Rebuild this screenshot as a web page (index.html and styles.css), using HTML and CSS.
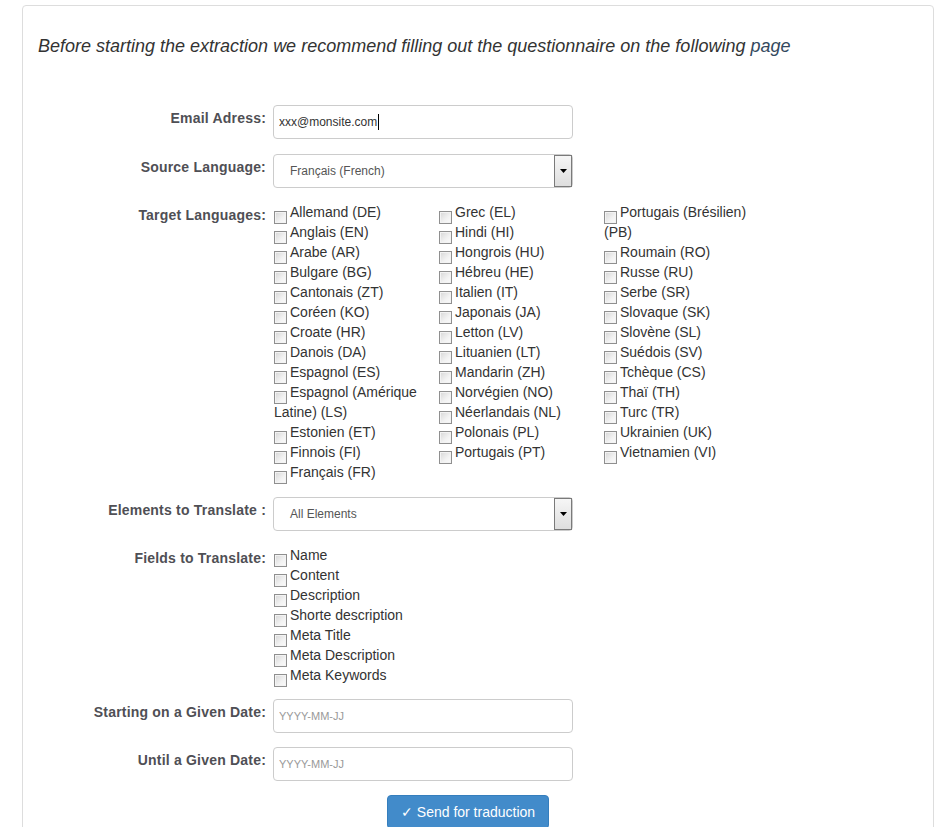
FILE: index.html
```html
<!DOCTYPE html>
<html lang="en">
<head>
<meta charset="utf-8">
<title>Extraction</title>
<link rel="stylesheet" href="styles.css">
</head>
<body>
<div class="page">
  <div class="panel">
    <p class="intro">Before starting the extraction we recommend filling out the questionnaire on the following <a class="intro-link">page</a></p>
    <form class="form">
      <label class="label">Email Adress:</label>
      <div class="field field-email">
        <input class="input" type="text" value="xxx@monsite.com">
        <span class="caret"></span>
      </div>

      <label class="label">Source Language:</label>
      <div class="field">
        <div class="select"><span class="select-text">Français (French)</span><span class="select-btn"><svg width="7" height="4" viewBox="0 0 7 4"><path d="M0 0H7L3.5 4Z" fill="#000"/></svg></span></div>
      </div>

      <label class="label">Target Languages:</label>
      <div class="checks">
        <div class="check-col">
          <label class="check"><input class="cb" type="checkbox">Allemand (DE)</label>
          <label class="check"><input class="cb" type="checkbox">Anglais (EN)</label>
          <label class="check"><input class="cb" type="checkbox">Arabe (AR)</label>
          <label class="check"><input class="cb" type="checkbox">Bulgare (BG)</label>
          <label class="check"><input class="cb" type="checkbox">Cantonais (ZT)</label>
          <label class="check"><input class="cb" type="checkbox">Coréen (KO)</label>
          <label class="check"><input class="cb" type="checkbox">Croate (HR)</label>
          <label class="check"><input class="cb" type="checkbox">Danois (DA)</label>
          <label class="check"><input class="cb" type="checkbox">Espagnol (ES)</label>
          <label class="check"><input class="cb" type="checkbox">Espagnol (Amérique Latine) (LS)</label>
          <label class="check"><input class="cb" type="checkbox">Estonien (ET)</label>
          <label class="check"><input class="cb" type="checkbox">Finnois (FI)</label>
          <label class="check"><input class="cb" type="checkbox">Français (FR)</label>
        </div>
        <div class="check-col">
          <label class="check"><input class="cb" type="checkbox">Grec (EL)</label>
          <label class="check"><input class="cb" type="checkbox">Hindi (HI)</label>
          <label class="check"><input class="cb" type="checkbox">Hongrois (HU)</label>
          <label class="check"><input class="cb" type="checkbox">Hébreu (HE)</label>
          <label class="check"><input class="cb" type="checkbox">Italien (IT)</label>
          <label class="check"><input class="cb" type="checkbox">Japonais (JA)</label>
          <label class="check"><input class="cb" type="checkbox">Letton (LV)</label>
          <label class="check"><input class="cb" type="checkbox">Lituanien (LT)</label>
          <label class="check"><input class="cb" type="checkbox">Mandarin (ZH)</label>
          <label class="check"><input class="cb" type="checkbox">Norvégien (NO)</label>
          <label class="check"><input class="cb" type="checkbox">Néerlandais (NL)</label>
          <label class="check"><input class="cb" type="checkbox">Polonais (PL)</label>
          <label class="check"><input class="cb" type="checkbox">Portugais (PT)</label>
        </div>
        <div class="check-col">
          <label class="check"><input class="cb" type="checkbox">Portugais (Brésilien) (PB)</label>
          <label class="check"><input class="cb" type="checkbox">Roumain (RO)</label>
          <label class="check"><input class="cb" type="checkbox">Russe (RU)</label>
          <label class="check"><input class="cb" type="checkbox">Serbe (SR)</label>
          <label class="check"><input class="cb" type="checkbox">Slovaque (SK)</label>
          <label class="check"><input class="cb" type="checkbox">Slovène (SL)</label>
          <label class="check"><input class="cb" type="checkbox">Suédois (SV)</label>
          <label class="check"><input class="cb" type="checkbox">Tchèque (CS)</label>
          <label class="check"><input class="cb" type="checkbox">Thaï (TH)</label>
          <label class="check"><input class="cb" type="checkbox">Turc (TR)</label>
          <label class="check"><input class="cb" type="checkbox">Ukrainien (UK)</label>
          <label class="check"><input class="cb" type="checkbox">Vietnamien (VI)</label>
        </div>
      </div>

      <label class="label">Elements to Translate :</label>
      <div class="field">
        <div class="select"><span class="select-text">All Elements</span><span class="select-btn"><svg width="7" height="4" viewBox="0 0 7 4"><path d="M0 0H7L3.5 4Z" fill="#000"/></svg></span></div>
      </div>

      <label class="label">Fields to Translate:</label>
      <div class="checks checks-fields">
        <div class="check-col">
          <label class="check"><input class="cb" type="checkbox">Name</label>
          <label class="check"><input class="cb" type="checkbox">Content</label>
          <label class="check"><input class="cb" type="checkbox">Description</label>
          <label class="check"><input class="cb" type="checkbox">Shorte description</label>
          <label class="check"><input class="cb" type="checkbox">Meta Title</label>
          <label class="check"><input class="cb" type="checkbox">Meta Description</label>
          <label class="check"><input class="cb" type="checkbox">Meta Keywords</label>
        </div>
      </div>

      <label class="label">Starting on a Given Date:</label>
      <div class="field"><input class="input input-date" type="text" placeholder="YYYY-MM-JJ"></div>

      <label class="label">Until a Given Date:</label>
      <div class="field"><input class="input input-date" type="text" placeholder="YYYY-MM-JJ"></div>

      <div class="actions">
        <button class="btn" type="button">✓ Send for traduction</button>
      </div>
    </form>
  </div>
</div>
</body>
</html>
```
FILE: styles.css
```css
* { box-sizing: border-box; }
html, body { margin: 0; padding: 0; background: #fff; }
body {
  font-family: "Liberation Sans", Arial, sans-serif;
  font-size: 14px;
  line-height: 20px;
  color: #333;
}
.page {
  padding: 5px 14px 0 22px;
}
.panel {
  border: 1px solid #ddd;
  border-radius: 4px;
  padding: 30px 15px 40px 15px;
  min-height: 900px;
}
.intro {
  margin: 0 0 49px 0;
  font-size: 18px;
  line-height: 20px;
  font-style: italic;
  color: #333;
}
.intro-link {
  color: #34495e;
  text-decoration: none;
}
.form {
  display: grid;
  grid-template-columns: 228px 1fr;
  column-gap: 7px;
  row-gap: 14px;
  align-items: start;
}
.label {
  text-align: right;
  font-weight: bold;
  color: #4f4f55;
  padding-top: 3px;
  line-height: 20px;
  letter-spacing: 0.2px;
}
.field {
  position: relative;
}
.field-email {
  margin-bottom: 1px;
}
.input {
  display: block;
  width: 300px;
  height: 34px;
  border: 1px solid #ccc;
  border-radius: 4px;
  padding: 0 5px;
  font-family: "Liberation Sans", Arial, sans-serif;
  font-size: 12px;
  color: #333;
  background: #fff;
  outline: none;
}
.input-date::placeholder {
  color: #999;
  font-size: 11px;
}
.caret {
  position: absolute;
  left: 105px;
  top: 9px;
  width: 1px;
  height: 16px;
  background: #000;
}
.select {
  display: flex;
  width: 300px;
  height: 34px;
  border: 1px solid #ccc;
  border-radius: 4px;
  background: #fff;
}
.select-text {
  flex: 1;
  padding-left: 16px;
  font-size: 12px;
  line-height: 32px;
  color: #555;
}
.select-btn {
  width: 18px;
  border: 1px solid #7a7a7a;
  background: linear-gradient(#f6f6f6, #dedede);
  display: flex;
  align-items: center;
  justify-content: center;
}
.select-btn svg { display: block; }
.checks {
  display: flex;
  padding-left: 1px;
  margin-bottom: 1px;
}
.checks-fields {
  margin-bottom: 0;
}
.check-col {
  width: 165px;
}
.check {
  display: block;
  font-size: 14px;
  line-height: 20px;
  color: #333;
}
.cb {
  appearance: none;
  -webkit-appearance: none;
  width: 13px;
  height: 13px;
  margin: 0 3px -3px 0;
  vertical-align: -4px;
  border: 1px solid #8f8f8f;
  background: linear-gradient(135deg, #d6d6d6 0%, #f2f2f2 60%, #fbfbfb 100%);
  box-shadow: inset 0 0 0 1px #f3f3f3;
}
.actions {
  grid-column: 2;
  padding-left: 114px;
}
.btn {
  font-family: "Liberation Sans", Arial, sans-serif;
  font-size: 14px;
  line-height: 20px;
  color: #fff;
  background: #428bca;
  border: 1px solid #357ebd;
  border-radius: 4px;
  padding: 6px 12px;
  width: 162px;
  height: 34px;
  cursor: pointer;
}
```
